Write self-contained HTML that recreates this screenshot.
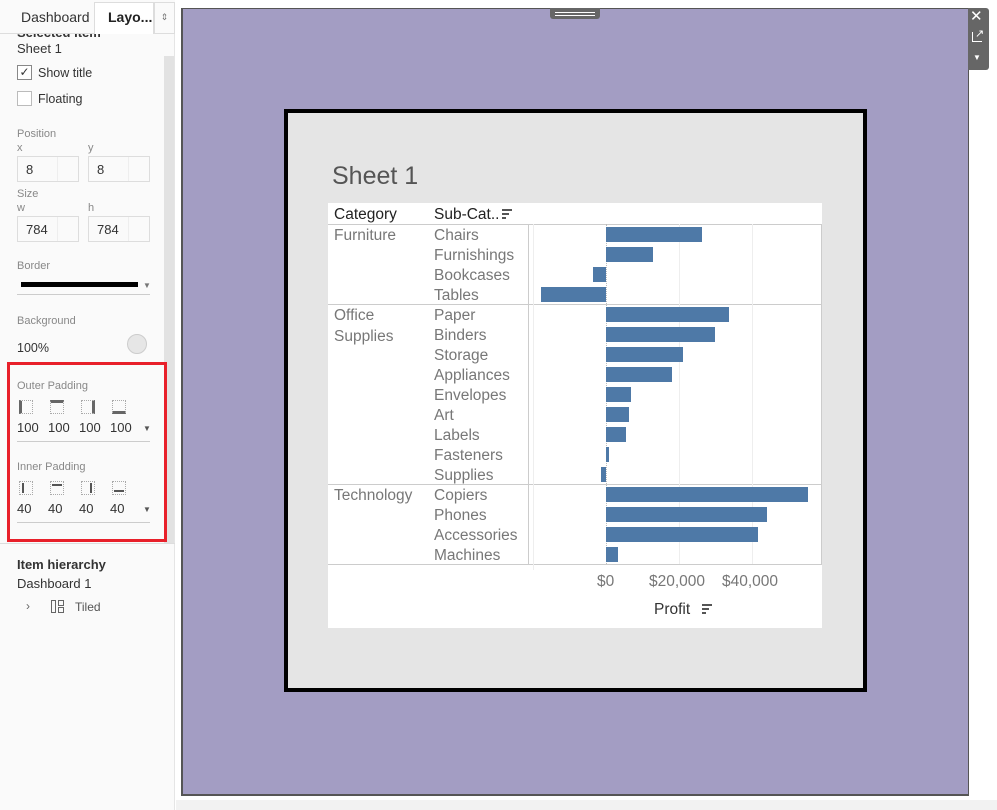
<!DOCTYPE html>
<html><head><style>
*{margin:0;padding:0;box-sizing:border-box}
body{width:997px;height:810px;position:relative;background:#fff;font-family:"Liberation Sans",sans-serif;overflow:hidden}
.a{position:absolute}
.lp{color:#333;font-size:13px}
.lbl{color:#888;font-size:11px}
.inp{position:absolute;width:62px;height:26px;border:1px solid #ddd;background:#fafafa;font-size:13px;color:#333;padding:5px 0 0 8px}
.inp:after{content:"";position:absolute;right:0;top:0;width:20px;height:24px;border-left:1px solid #eee}
.inp i{position:absolute;right:6px;width:0;height:0;border-left:4px solid transparent;border-right:4px solid transparent}
.pi{position:absolute;width:14px;height:14px;border:1px dotted #aaa}
.t{position:absolute;font-size:15.5px;color:#777;line-height:20px;height:20px}
.bar{position:absolute;height:15px;background:#4e79a7}
</style></head><body>
<div class="a" style="left:0;top:0;width:175px;height:810px;background:#fafafa;border-right:1px solid #e5e5e5"></div>
<div class="a" style="left:164px;top:56px;width:10px;height:487px;background:#e2e2e2"></div>
<div class="a" style="left:0;top:0;width:175px;height:34px;border-bottom:1px solid #ddd;background:#fafafa"></div>
<div class="a lp" style="left:21px;top:9px;font-size:14px">Dashboard</div>
<div class="a" style="left:94px;top:2px;width:60px;height:32px;border:1px solid #ddd;border-bottom:none;background:#fff"></div>
<div class="a" style="left:108px;top:9px;font-size:14px;font-weight:bold;color:#222">Layo...</div>
<div class="a" style="left:154px;top:2px;width:21px;height:32px;border:1px solid #ddd;border-bottom:none;color:#777;font-size:9px;text-align:center;padding-top:9px">&#8661;</div>
<div class="a" style="left:17px;top:34px;width:90px;height:4px;overflow:hidden"><div style="margin-top:-9px;font-size:13px;font-weight:bold;color:#333">Selected Item</div></div>
<div class="a lp" style="left:17px;top:41px">Sheet 1</div>
<div class="a" style="left:17px;top:65px;width:15px;height:15px;border:1px solid #888;background:#fff;font-size:12px;line-height:13px;text-align:center;color:#333">&#10003;</div>
<div class="a lp" style="left:38px;top:66px;font-size:12.5px">Show title</div>
<div class="a" style="left:17px;top:91px;width:15px;height:15px;border:1px solid #bbb;background:#fff"></div>
<div class="a lp" style="left:38px;top:92px;font-size:12.5px">Floating</div>
<div class="a lbl" style="left:17px;top:128px">Position</div>
<div class="a lbl" style="left:17px;top:142px">x</div>
<div class="a lbl" style="left:88px;top:142px">y</div>
<div class="inp" style="left:17px;top:156px">8</div>
<div class="inp" style="left:88px;top:156px">8</div>
<div class="a lbl" style="left:17px;top:188px">Size</div>
<div class="a lbl" style="left:17px;top:202px">w</div>
<div class="a lbl" style="left:88px;top:202px">h</div>
<div class="inp" style="left:17px;top:216px">784</div>
<div class="inp" style="left:88px;top:216px">784</div>
<div class="a lbl" style="left:17px;top:260px">Border</div>
<div class="a" style="left:21px;top:282px;width:117px;height:5px;background:#000"></div>
<div class="a" style="left:143px;top:281px;color:#777;font-size:8px">&#9660;</div>
<div class="a" style="left:17px;top:294px;width:133px;height:1px;background:#ccc"></div>
<div class="a lbl" style="left:17px;top:315px">Background</div>
<div class="a lp" style="left:17px;top:341px;font-size:12.5px">100%</div>
<div class="a" style="left:127px;top:334px;width:20px;height:20px;border-radius:50%;background:#e6e6e6;border:1px solid #ccc"></div>
<div class="a" style="left:7px;top:362px;width:160px;height:180px;border:3px solid #e8202a"></div>
<div class="a lbl" style="left:17px;top:380px">Outer Padding</div>
<div class="pi" style="left:19px;top:400px;border-left:3px solid #666"></div>
<div class="pi" style="left:50px;top:400px;border-top:3px solid #666"></div>
<div class="pi" style="left:81px;top:400px;border-right:3px solid #666"></div>
<div class="pi" style="left:112px;top:400px;border-bottom:3px solid #666"></div>
<div class="a lp" style="left:17px;top:420px"><span style="position:absolute;left:0">100</span><span style="position:absolute;left:31px">100</span><span style="position:absolute;left:62px">100</span><span style="position:absolute;left:93px">100</span></div>
<div class="a" style="left:143px;top:424px;color:#555;font-size:8px">&#9660;</div>
<div class="a" style="left:17px;top:441px;width:133px;height:1px;background:#ccc"></div>
<div class="a lbl" style="left:17px;top:461px">Inner Padding</div>
<div class="pi" style="left:19px;top:481px"><div style="position:absolute;left:2px;top:1px;width:2px;height:10px;background:#555"></div></div>
<div class="pi" style="left:50px;top:481px"><div style="position:absolute;left:1px;top:2px;width:10px;height:2px;background:#555"></div></div>
<div class="pi" style="left:81px;top:481px"><div style="position:absolute;right:2px;top:1px;width:2px;height:10px;background:#555"></div></div>
<div class="pi" style="left:112px;top:481px"><div style="position:absolute;left:1px;bottom:2px;width:10px;height:2px;background:#555"></div></div>
<div class="a lp" style="left:17px;top:501px"><span style="position:absolute;left:0">40</span><span style="position:absolute;left:31px">40</span><span style="position:absolute;left:62px">40</span><span style="position:absolute;left:93px">40</span></div>
<div class="a" style="left:143px;top:505px;color:#555;font-size:8px">&#9660;</div>
<div class="a" style="left:17px;top:522px;width:133px;height:1px;background:#ccc"></div>
<div class="a" style="left:0;top:543px;width:175px;height:1px;background:#ddd"></div>
<div class="a" style="left:17px;top:557px;font-size:13px;font-weight:bold;color:#333">Item hierarchy</div>
<div class="a lp" style="left:17px;top:576px">Dashboard 1</div>
<div class="a" style="left:26px;top:599px;color:#666;font-size:12px">&#8250;</div>
<div class="a" style="left:51px;top:600px;width:5px;height:13px;border:1px solid #666"></div>
<div class="a" style="left:58px;top:600px;width:6px;height:6px;border:1px solid #666"></div>
<div class="a" style="left:58px;top:607px;width:6px;height:6px;border:1px solid #666"></div>
<div class="a" style="left:75px;top:600px;font-size:12px;color:#555">Tiled</div>

<div class="a" style="left:176px;top:800px;width:821px;height:10px;background:#f2f2f2"></div>
<div class="a" style="left:181px;top:8px;width:788px;height:788px;background:#a39dc3;border:1px solid #555;border-left-width:2px;border-bottom-width:2px"></div>
<div class="a" style="left:550px;top:8px;width:50px;height:11px;background:#666;border-radius:0 0 3px 3px"></div>
<div class="a" style="left:555px;top:12px;width:40px;height:1px;background:#fff"></div>
<div class="a" style="left:555px;top:15px;width:40px;height:1px;background:#fff"></div>
<div class="a" style="left:968px;top:8px;width:21px;height:62px;background:#666;border-radius:0 3px 3px 0"></div>
<div class="a" style="left:970px;top:7px;color:#fff;font-size:15px">&#10005;</div>
<div class="a" style="left:972px;top:32px;width:10px;height:10px;border:1.5px solid #fff;border-top:none;border-right:none"></div>
<div class="a" style="left:975px;top:27px;color:#fff;font-size:11px">&#8599;</div>
<div class="a" style="left:973px;top:53px;color:#fff;font-size:8px">&#9660;</div>

<div class="a" style="left:284px;top:109px;width:583px;height:583px;border:4px solid #000;background:#e5e5e5"></div>
<div class="a" style="left:332px;top:162px;font-size:25px;color:#555">Sheet 1</div>
<div class="a" style="left:328px;top:203px;width:494px;height:425px;background:#fff"></div>
<div class="a" style="left:328px;top:224px;width:494px;height:1px;background:#ccc"></div>
<div class="a" style="left:328px;top:304px;width:494px;height:1px;background:#ccc"></div>
<div class="a" style="left:328px;top:484px;width:494px;height:1px;background:#ccc"></div>
<div class="a" style="left:328px;top:564px;width:494px;height:1px;background:#ccc"></div>
<div class="a" style="left:528px;top:224px;width:1px;height:340px;background:#ccc"></div>
<div class="a" style="left:821px;top:224px;width:1px;height:340px;background:#ccc"></div>
<div class="a" style="left:533px;top:224px;width:1px;height:346px;background:#eee"></div>
<div class="a" style="left:679px;top:224px;width:1px;height:340px;background:#eee"></div>
<div class="a" style="left:752px;top:224px;width:1px;height:340px;background:#eee"></div>
<div class="a" style="left:606px;top:224px;width:1px;height:340px;border-left:1px dotted #bbb"></div>
<div class="t" style="left:334px;top:205px;color:#222">Category</div>
<div class="t" style="left:434px;top:205px;color:#222">Sub-Cat..</div>
<div class="a" style="left:502px;top:209px;width:10px;height:2px;background:#555"></div>
<div class="a" style="left:502px;top:213px;width:7px;height:2px;background:#555"></div>
<div class="a" style="left:502px;top:217px;width:4px;height:2px;background:#555"></div>
<div class="t" style="left:334px;top:226px">Furniture</div>
<div class="t" style="left:334px;top:306px">Office</div>
<div class="t" style="left:334px;top:327px">Supplies</div>
<div class="t" style="left:334px;top:486px">Technology</div>
<div class="t" style="left:434px;top:226px">Chairs</div>
<div class="t" style="left:434px;top:246px">Furnishings</div>
<div class="t" style="left:434px;top:266px">Bookcases</div>
<div class="t" style="left:434px;top:286px">Tables</div>
<div class="t" style="left:434px;top:306px">Paper</div>
<div class="t" style="left:434px;top:326px">Binders</div>
<div class="t" style="left:434px;top:346px">Storage</div>
<div class="t" style="left:434px;top:366px">Appliances</div>
<div class="t" style="left:434px;top:386px">Envelopes</div>
<div class="t" style="left:434px;top:406px">Art</div>
<div class="t" style="left:434px;top:426px">Labels</div>
<div class="t" style="left:434px;top:446px">Fasteners</div>
<div class="t" style="left:434px;top:466px">Supplies</div>
<div class="t" style="left:434px;top:486px">Copiers</div>
<div class="t" style="left:434px;top:506px">Phones</div>
<div class="t" style="left:434px;top:526px">Accessories</div>
<div class="t" style="left:434px;top:546px">Machines</div>
<div class="bar" style="left:606px;top:227px;width:96px"></div>
<div class="bar" style="left:606px;top:247px;width:47px"></div>
<div class="bar" style="left:593px;top:267px;width:13px"></div>
<div class="bar" style="left:541px;top:287px;width:65px"></div>
<div class="bar" style="left:606px;top:307px;width:123px"></div>
<div class="bar" style="left:606px;top:327px;width:109px"></div>
<div class="bar" style="left:606px;top:347px;width:77px"></div>
<div class="bar" style="left:606px;top:367px;width:66px"></div>
<div class="bar" style="left:606px;top:387px;width:25px"></div>
<div class="bar" style="left:606px;top:407px;width:23px"></div>
<div class="bar" style="left:606px;top:427px;width:20px"></div>
<div class="bar" style="left:606px;top:447px;width:3px"></div>
<div class="bar" style="left:601px;top:467px;width:5px"></div>
<div class="bar" style="left:606px;top:487px;width:202px"></div>
<div class="bar" style="left:606px;top:507px;width:161px"></div>
<div class="bar" style="left:606px;top:527px;width:152px"></div>
<div class="bar" style="left:606px;top:547px;width:12px"></div>
<div class="t" style="left:597px;top:572px">$0</div>
<div class="t" style="left:649px;top:572px">$20,000</div>
<div class="t" style="left:722px;top:572px">$40,000</div>
<div class="t" style="left:654px;top:600px;color:#333">Profit</div>
<div class="a" style="left:702px;top:604px;width:10px;height:2px;background:#555"></div>
<div class="a" style="left:702px;top:608px;width:7px;height:2px;background:#555"></div>
<div class="a" style="left:702px;top:612px;width:4px;height:2px;background:#555"></div>
</body></html>
